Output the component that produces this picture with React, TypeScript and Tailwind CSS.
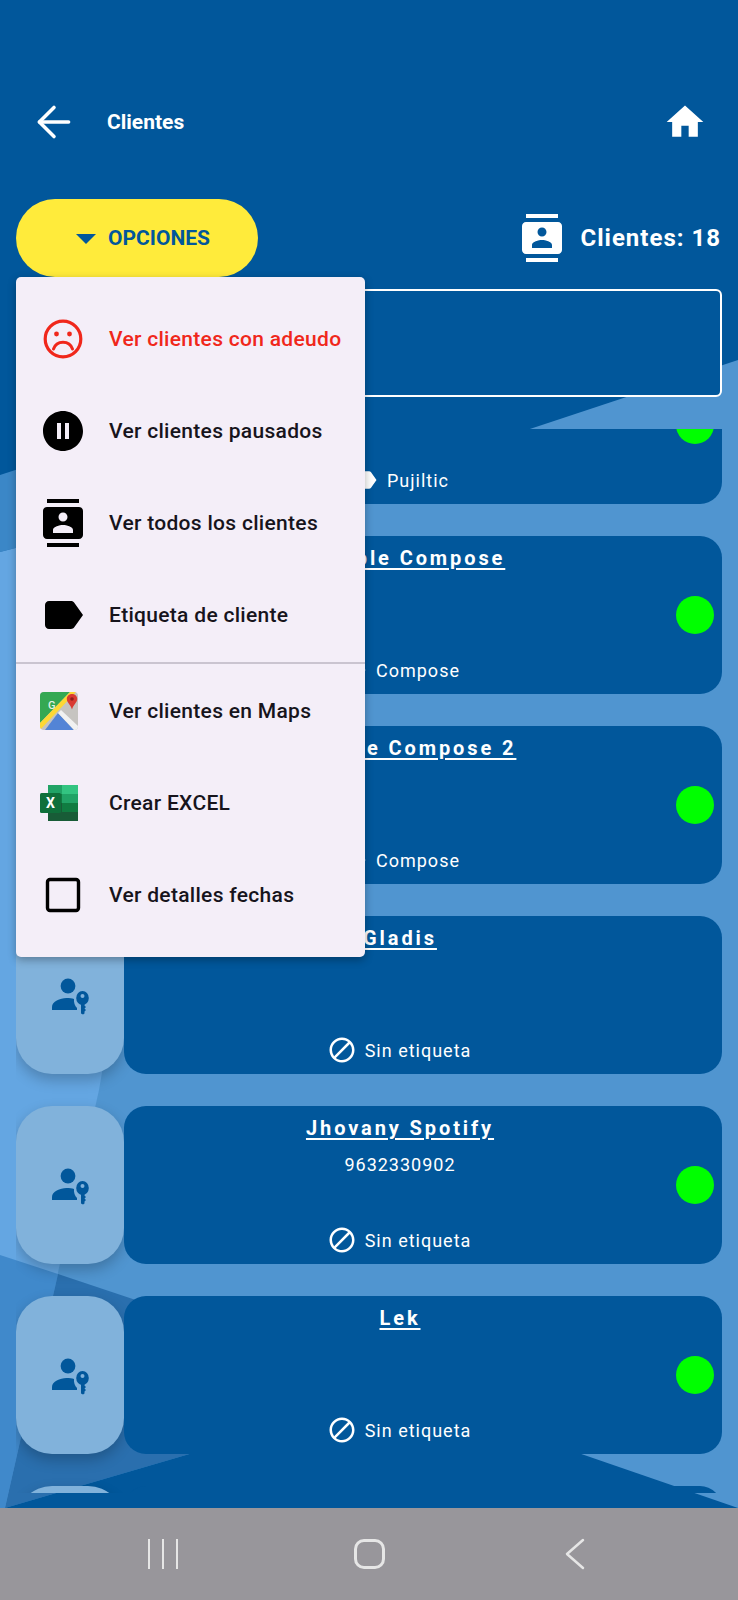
import React from "react";
import { ArrowLeft } from "lucide-react";
import {
  MdArrowDropDown,
  MdBlock,
  MdContacts,
  MdHome,
  MdLabel,
  MdPauseCircleFilled,
} from "react-icons/md";

const roboto = "font-['Roboto',sans-serif]";

function Background() {
  return (
    <svg className="absolute inset-0" width="738" height="1600" viewBox="0 0 738 1600" aria-hidden="true">
      <polygon points="738,360 0,605 0,1508 738,1508" fill="#5095d0" />
      <polygon points="0,475 200,410 200,500 0,552" fill="#3b87c7" />
      <polygon points="0,552 200,500 99,1090 5,1508 0,1508" fill="#64a6e2" />
      <polygon points="0,1255 58,1274 5,1508 0,1508" fill="#4089cb" />
      <polygon points="58,1274 300,1355 401,1392 5,1508" fill="#2a6fae" />
      <polygon points="401,1392 738,1508 5,1508" fill="#01579b" />
    </svg>
  );
}

function PersonKey() {
  return (
    <svg width="40" height="42" viewBox="0 0 40 42" aria-hidden="true">
      <circle cx="18" cy="12" r="7.4" fill="#01579b" />
      <path d="M2 36v-3c0-5.500 8-9 14.500-9 3 0 5.500.4 7.500 1-.4 3.500.8 7 3 9v2z" fill="#01579b" />
      <ellipse cx="32.500" cy="24" rx="6.300" ry="7" fill="#01579b" />
      <circle cx="32.500" cy="22" r="2" fill="#81b2db" />
      <path d="M31 29h3.500v2.500l1.500 1.500-1.500 1.500 1.500 1.500-1.500 1.500v2l-1.500 1-2-1z" fill="#01579b" />
    </svg>
  );
}

type CardData = { name?: string; phone?: string; label?: string; none?: boolean; noDot?: boolean };

function ClientCard({ name, phone, label, none, noDot }: CardData) {
  return (
    <div className="flex h-[158px] shrink-0">
      <div className="flex w-[108px] items-center justify-center rounded-[36px] bg-[#81b2db] shadow-[0_6px_14px_rgba(0,0,0,0.22)]">
        <PersonKey />
      </div>
      <div className="flex flex-1 items-center rounded-[22px] bg-[#01579b] pr-2 text-white">
        <div className="flex h-full flex-1 flex-col items-center pt-[10px] pb-[11px]">
          {name && (
            <div className="text-[20px] leading-[24px] font-bold tracking-[2.900px] underline underline-offset-[3px]">{name}</div>
          )}
          {phone && <div className="mt-[14px] text-[18px] leading-[22px] tracking-[1px]">{phone}</div>}
          {label && (
            <div className="mt-auto flex h-[26px] items-center gap-[10px] text-[18px] tracking-[1px]">
              {none ? <MdBlock size={30} className="-mx-[2px]" /> : <MdLabel size={30} className="-mx-[2px]" />}
              <span>{label}</span>
            </div>
          )}
        </div>
        <div className={`h-[38px] w-[38px] rounded-full ${noDot ? "" : "bg-[#00ff00]"}`} />
      </div>
    </div>
  );
}

function SadFace() {
  return (
    <svg width="40" height="40" viewBox="0 0 40 40" fill="none" aria-hidden="true">
      <circle cx="20" cy="20" r="17.800" stroke="#f0271b" strokeWidth="3.200" />
      <circle cx="13.500" cy="15" r="2.400" fill="#f0271b" />
      <circle cx="26.500" cy="15" r="2.400" fill="#f0271b" />
      <path d="M10.500 30c1.500-4.500 5-6.800 9.500-6.800s8 2.300 9.500 6.800" stroke="#f0271b" strokeWidth="3" strokeLinecap="round" />
    </svg>
  );
}

function EmptyBox() {
  return (
    <svg width="36" height="36" viewBox="0 0 36 36" fill="none" aria-hidden="true">
      <rect x="2.500" y="2.500" width="31" height="31" rx="2.500" stroke="#000000" strokeWidth="3.400" />
    </svg>
  );
}

function MapsLogo() {
  return (
    <svg width="38" height="38" viewBox="0 0 38 38" aria-hidden="true">
      <defs>
        <clipPath id="mapsClip">
          <rect x="0" y="0" width="38" height="38" rx="4" />
        </clipPath>
      </defs>
      <g clipPath="url(#mapsClip)">
        <rect width="38" height="38" fill="#c6c4c1" />
        <polygon points="0,0 30,0 0,31" fill="#34a853" />
        <polygon points="5,38 18,21 34,38" fill="#5384d6" />
        <polygon points="18,21 21,18 38,34 38,38 34,38" fill="#f1f1f1" />
        <polygon points="0,31 30,0 36,0 0,38" fill="#fdd835" />
      </g>
      <text x="8" y="17" fontSize="11" fontWeight="500" fill="#e4f3e6" fontFamily="Roboto, sans-serif">G</text>
      <path d="M32 2c-3.200 0-5.200 2.300-5.200 5 0 3.600 3.800 5.500 5.200 10.500 1.400-5 5.200-6.900 5.200-10.500 0-2.700-2-5-5.200-5z" fill="#d93a32" />
      <circle cx="32" cy="7" r="1.800" fill="#8e1f1a" />
    </svg>
  );
}

function ExcelLogo() {
  return (
    <svg width="38" height="36" viewBox="0 0 38 36" aria-hidden="true">
      <rect x="8" y="0" width="14" height="9" fill="#21a366" />
      <rect x="22" y="0" width="16" height="9" fill="#33c481" />
      <rect x="8" y="9" width="30" height="9" fill="#21a366" />
      <rect x="8" y="9" width="14" height="9" fill="#107c41" />
      <rect x="8" y="18" width="14" height="9" fill="#185c37" />
      <rect x="22" y="18" width="16" height="9" fill="#107c41" />
      <rect x="8" y="27" width="30" height="9" fill="#185c37" />
      <rect x="0" y="8" width="21" height="20" rx="1.500" fill="#0f703b" />
      <text x="10.500" y="23" fontSize="14" fontWeight="700" fill="#ffffff" textAnchor="middle" fontFamily="Roboto, sans-serif">X</text>
    </svg>
  );
}

function MenuItem({ icon, text, red, shift }: { icon: React.ReactNode; text: string; red?: boolean; shift?: boolean }) {
  return (
    <div className={`flex h-[92px] items-center ${red ? "text-[#f0271b]" : "text-[#17141c]"}`}>
      <div className={`flex w-[93px] shrink-0 items-center justify-center ${shift ? "pr-[8px]" : ""}`}>{icon}</div>
      <span className="pt-[2px] text-[21px] font-medium tracking-[0.3px] whitespace-nowrap">{text}</span>
    </div>
  );
}

const cards: CardData[] = [
  { label: "Pujiltic" },
  { name: "Example Compose", label: "Compose" },
  { name: "Example Compose 2", label: "Compose" },
  { name: "Gladis", label: "Sin etiqueta", none: true, noDot: true },
  { name: "Jhovany Spotify", phone: "9632330902", label: "Sin etiqueta", none: true },
  { name: "Lek", label: "Sin etiqueta", none: true },
  {},
];

export default function App() {
  return (
    <div className={`relative flex h-[1600px] w-[738px] flex-col overflow-hidden bg-[#01579b] ${roboto}`}>
      <Background />

      <div className="relative flex h-full flex-col">
        <header className="mt-[100px] flex h-[44px] items-center pr-[31px] pl-[29px] text-white">
          <ArrowLeft size={50} strokeWidth={1.7} />
          <h1 className="ml-[28px] flex-1 pt-[2px] text-[21px] font-bold">Clientes</h1>
          <MdHome size={44} />
        </header>

        <div className="mt-[55px] flex h-[78px] items-center justify-between pr-[17px] pl-[16px]">
          <button className="flex h-[78px] w-[242px] items-center justify-center rounded-[39px] bg-[#ffeb3b] pr-[2px] text-[21px] font-bold text-[#01579b]">
            <MdArrowDropDown size={48} className="-mr-[2px]" />
            <span className="pt-[2px]">OPCIONES</span>
          </button>
          <div className="flex items-center gap-[15px] text-white">
            <MdContacts size={48} />
            <span className="text-[24px] font-bold tracking-[1px]">Clientes: 18</span>
          </div>
        </div>

        <div className="mt-[12px] mr-[16px] ml-[16px] h-[108px] rounded-[6px] border-2 border-white bg-[#01579b]" />

        <div className="mt-[32px] mr-[16px] ml-[16px] flex h-[1064px] flex-col overflow-hidden">
          <div className="-mt-[83px] flex flex-col gap-[32px]">
            {cards.map((c, i) => (
              <ClientCard key={i} {...c} />
            ))}
          </div>
        </div>

        <nav className="mt-auto flex h-[92px] items-center bg-[#98969b] pl-[60px]">
          <div className="flex w-[206px] justify-center gap-[12px]">
            <span className="h-[30px] w-[2px] bg-[#e6e6e6]" />
            <span className="h-[30px] w-[2px] bg-[#e6e6e6]" />
            <span className="h-[30px] w-[2px] bg-[#e6e6e6]" />
          </div>
          <div className="flex w-[206px] justify-center">
            <span className="h-[30px] w-[31px] rounded-[10px] border-[3px] border-[#e6e6e6]" />
          </div>
          <div className="flex w-[206px] justify-center">
            <svg width="22" height="32" viewBox="0 0 22 32" fill="none" aria-hidden="true">
              <path d="M19 2 3 16l16 14" stroke="#e6e6e6" strokeWidth="2.500" strokeLinecap="round" strokeLinejoin="round" />
            </svg>
          </div>
        </nav>
      </div>

      <div className="absolute top-[277px] left-[16px] w-[349px] rounded-[5px] bg-[#f4eef8] py-[16px] shadow-[0_3px_8px_rgba(0,0,0,0.3)]">
        <MenuItem red icon={<SadFace />} text="Ver clientes con adeudo" />
        <MenuItem icon={<MdPauseCircleFilled size={48} className="text-black" />} text="Ver clientes pausados" />
        <MenuItem icon={<MdContacts size={48} className="text-black" />} text="Ver todos los clientes" />
        <MenuItem icon={<MdLabel size={48} className="text-black" />} text="Etiqueta de cliente" />
        <div className="my-px h-[1.5px] bg-[#cac4d0]" />
        <MenuItem shift icon={<MapsLogo />} text="Ver clientes en Maps" />
        <MenuItem shift icon={<ExcelLogo />} text="Crear EXCEL" />
        <MenuItem icon={<EmptyBox />} text="Ver detalles fechas" />
      </div>
    </div>
  );
}
